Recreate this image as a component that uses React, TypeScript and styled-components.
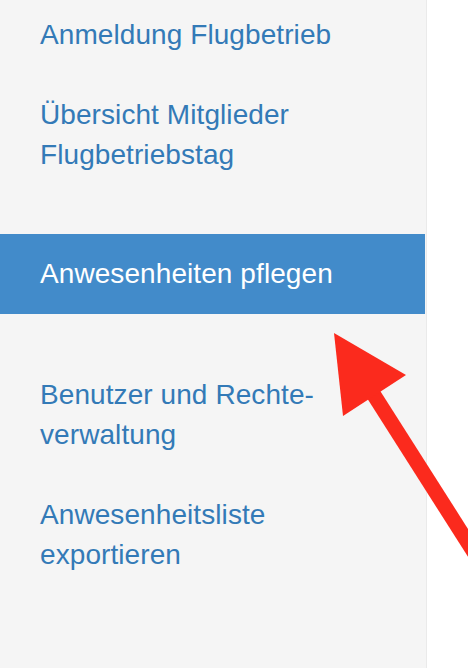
import React from "react";
import styled, { createGlobalStyle } from "styled-components";

const Global = createGlobalStyle`
  html, body { margin: 0; padding: 0; height: 100%; overflow: hidden; background: #ffffff; }
  #root { height: 100%; }
`;

const Page = styled.div`
  position: relative;
  display: flex;
  width: 468px;
  height: 668px;
  overflow: hidden;
  font-family: "Liberation Sans", Arial, Helvetica, sans-serif;
`;

const Sidebar = styled.nav`
  width: 426px;
  flex: none;
  background: #f5f5f5;
  border-right: 1px solid #eaeaea;
`;

const Main = styled.main`
  flex: 1;
  background: #ffffff;
`;

const NavList = styled.ul`
  list-style: none;
  margin: -5px 0 0 0;
  padding: 0;
`;

const NavItem = styled.li<{ $active?: boolean }>`
  margin: ${(p) => (p.$active ? "39px 1px 41px 0" : "0")};
  background: ${(p) => (p.$active ? "#428bca" : "transparent")};
`;

const NavLink = styled.a<{ $active?: boolean }>`
  display: block;
  padding: 20px 40px 20px 40px;
  font-size: 28px;
  line-height: 40px;
  letter-spacing: 0.08px;
  color: ${(p) => (p.$active ? "#ffffff" : "#337ab7")};
  text-decoration: none;
`;

const ArrowLayer = styled.svg`
  position: absolute;
  left: 0;
  top: 0;
  pointer-events: none;
`;

const items = [
  { label: "Anmeldung Flugbetrieb" },
  { label: "Übersicht Mitglieder Flugbetriebstag" },
  { label: "Anwesenheiten pflegen", active: true },
  { label: "Benutzer und Rechte-verwaltung" },
  { label: "Anwesenheitsliste exportieren" },
];

export default function App() {
  return (
    <>
      <Global />
      <Page>
        <Sidebar>
          <NavList>
            {items.map((it) => (
              <NavItem key={it.label} $active={it.active}>
                <NavLink href="#" $active={it.active}>
                  {it.label}
                </NavLink>
              </NavItem>
            ))}
          </NavList>
        </Sidebar>
        <Main />
        <ArrowLayer width="468" height="668" viewBox="0 0 468 668">
          <line x1="372" y1="392" x2="484" y2="568" stroke="#fb2a1d" strokeWidth="15" />
          <polygon points="334,333 406,375 343,416" fill="#fb2a1d" />
        </ArrowLayer>
      </Page>
    </>
  );
}
